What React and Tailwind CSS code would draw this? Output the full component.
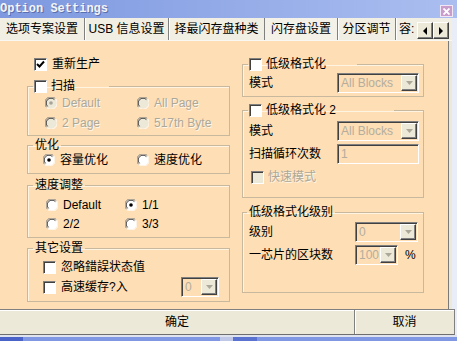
import clsx from 'clsx';

const FONT = "font-['Liberation_Sans','Noto_Sans_CJK_SC',sans-serif]";

function Check({ checked, disabled }) {
  return (
    <span
      className={clsx(
        'flex items-center justify-center w-[13px] h-[13px] shrink-0 border border-t-[#808080] border-l-[#808080] border-b-white border-r-white shadow-[inset_1px_1px_0_#404040]',
        disabled ? 'bg-[#ece9d8]' : 'bg-white'
      )}
    >
      {checked && (
        <svg width="9" height="9" viewBox="0 0 9 9">
          <path d="M1 4 L3.5 6.5 L8 1.5" stroke="#000" strokeWidth="2" fill="none" />
        </svg>
      )}
    </span>
  );
}

function Radio({ checked, disabled }) {
  return (
    <svg width="12" height="12" viewBox="0 0 12 12" className="shrink-0">
      <circle cx="6" cy="6" r="5.5" fill={disabled ? '#ece9d8' : '#fff'} />
      <path d="M1.6 10.4 A6 6 0 0 1 10.4 1.6" stroke="#808080" fill="none" />
      <path d="M2.6 9.4 A4.6 4.6 0 0 1 9.4 2.6" stroke="#404040" fill="none" />
      <path d="M10.4 1.6 A6 6 0 0 1 1.6 10.4" stroke="#fff" fill="none" />
      {checked && <circle cx="6" cy="6" r="1.8" fill={disabled ? '#a8a398' : '#000'} />}
    </svg>
  );
}

function Opt({ label, checked, disabled, gap = 'gap-[5px]' }) {
  return (
    <div className={clsx('flex items-center h-[16px]', gap)}>
      <Radio checked={checked} disabled={disabled} />
      <span className={disabled ? 'text-[#aca899] [text-shadow:1px_1px_0_#fff6e8]' : 'text-black'}>{label}</span>
    </div>
  );
}

function DropBtn() {
  return (
    <span className="flex items-center justify-center w-[16px] h-[16px] m-px bg-[#ece9d8] border border-t-white border-l-white border-b-[#404040] border-r-[#404040] shadow-[inset_-1px_-1px_0_#808080]">
      <svg width="7" height="4" viewBox="0 0 7 4">
        <path d="M0 0 H7 L3.5 4 Z" fill="#aca899" />
      </svg>
    </span>
  );
}

function Combo({ value, className, noBtn }) {
  return (
    <div
      className={clsx(
        'flex h-[20px] border border-t-[#808080] border-l-[#808080] border-b-white border-r-white shadow-[inset_1px_1px_0_#404040] bg-[#fddeb5]',
        className
      )}
    >
      <span className="flex-1 pl-[3px] leading-[18px] text-[#b4ad9f] overflow-hidden whitespace-nowrap">{value}</span>
      {!noBtn && <DropBtn />}
    </div>
  );
}

function Group({ legend, legendClass, className, children }) {
  return (
    <fieldset className={clsx('border border-[#c8b89e] shadow-[inset_1px_1px_0_#fff3e2]', className)}>
      <legend className={clsx('h-[14px] leading-[14px]', legendClass)}>
        <span className="flex items-center gap-[4px] h-[14px]">{legend}</span>
      </legend>
      {children}
    </fieldset>
  );
}

const TABS = [
  { label: '选项专案设置', w: 'w-[85px]' },
  { label: 'USB 信息设置', w: 'w-[84px]' },
  { label: '择最闪存盘种类', w: 'w-[96px]' },
  { label: '闪存盘设置', w: 'w-[73px]', active: true },
  { label: '分区调节', w: 'w-[58px]' },
];

export default function App() {
  return (
    <div className={clsx('w-[457px] h-[341px] overflow-hidden flex flex-col bg-[#e9edf8] text-[12px] text-black', FONT)}>
      {/* title bar */}
      <div className="h-[18px] shrink-0 flex items-center justify-between bg-gradient-to-r from-[#7d98df] to-[#abbef0]">
        <span className="font-['Liberation_Mono',monospace] font-bold text-[12px] leading-[18px] text-[#f4f4f4] [text-shadow:1px_1px_0_#5a6fae]">
          Option Settings
        </span>
        <span className="mr-[4px] mt-[4px] w-[13px] h-[12px] flex items-center justify-center bg-[#c89ccb] border border-[#f0e6f4]">
          <svg width="7" height="7" viewBox="0 0 7 7">
            <path d="M0.5 0.5 L6.5 6.5 M6.5 0.5 L0.5 6.5" stroke="#fff" strokeWidth="1.8" />
          </svg>
        </span>
      </div>

      {/* tabs */}
      <div className="h-[23px] shrink-0 flex items-stretch bg-[#f1eee3] border-b border-[#faf8f2] w-[452px]">
        {TABS.map(t => (
          <div
            key={t.label}
            className={clsx(
              'flex items-center justify-center border-r border-r-[#808080] shadow-[1px_0_0_#fff] whitespace-nowrap',
              t.w,
              t.active && 'bg-[#f4f1e8]'
            )}
          >
            {t.label}
          </div>
        ))}
        <div className="w-[20px] flex items-center pl-[3px] overflow-hidden whitespace-nowrap">容:</div>
        <div className="flex items-end pb-[1px] ml-[1px]">
          {['M5 0 L1 4 L5 8 Z', 'M1 0 L5 4 L1 8 Z'].map(d => (
            <span
              key={d}
              className="w-[16px] h-[17px] flex items-center justify-center bg-[#ece9d8] border border-t-white border-l-white border-b-[#404040] border-r-[#404040] shadow-[inset_-1px_-1px_0_#808080]"
            >
              <svg width="6" height="8" viewBox="0 0 6 8">
                <path d={d} fill="#000" />
              </svg>
            </span>
          ))}
        </div>
      </div>

      {/* body */}
      <div className="h-[268px] shrink-0 w-[452px] flex bg-[#fddeb5] border-r-[3px] border-r-[#ece9d8] shadow-[inset_-1px_0_0_#7a7a7a]">
        <div className="flex gap-[12px] pl-[27px]">
          {/* left column */}
          <div className="w-[203px] flex flex-col pt-[15px]">
            <div className="flex items-center gap-[5px] h-[16px] pl-[7px]">
              <Check checked />
              <span>重新生产</span>
            </div>

            <Group
              className="mt-[7px] pb-[4px]"
              legendClass="ml-[5px] px-[1px] w-[76px]"
              legend={<><Check /><span>扫描</span></>}
            >
              <div className="grid grid-cols-[92px_1fr] gap-y-[4px] pl-[17px] mt-[2px]">
                <Opt label="Default" checked disabled />
                <Opt label="All Page" disabled />
                <Opt label="2 Page" disabled />
                <Opt label="517th Byte" disabled />
              </div>
            </Group>

            <Group className="mt-[2px] pb-[5px]" legendClass="ml-[5px] px-[2px]" legend="优化">
              <div className="grid grid-cols-[94px_1fr] pl-[15px]">
                <Opt label="容量优化" checked />
                <Opt label="速度优化" />
              </div>
            </Group>

            <Group className="mt-[4px] pb-[5px]" legendClass="ml-[5px] px-[2px]" legend="速度调整">
              <div className="grid grid-cols-[79px_1fr] gap-y-[3px] pl-[18px] mt-[5px]">
                <Opt label="Default" />
                <Opt label="1/1" checked />
                <Opt label="2/2" />
                <Opt label="3/3" />
              </div>
            </Group>

            <Group className="mt-[3px] pb-[4px]" legendClass="ml-[5px] px-[2px]" legend="其它设置">
              <div className="flex flex-col pl-[15px] pr-[10px] mt-[4px] gap-[2px]">
                <div className="flex items-center gap-[5px] h-[16px]">
                  <Check />
                  <span>忽略錯誤状态值</span>
                </div>
                <div className="flex items-center justify-between h-[20px]">
                  <div className="flex items-center gap-[5px]">
                    <Check />
                    <span>高速缓存?入</span>
                  </div>
                  <Combo value="0" className="w-[38px]" />
                </div>
              </div>
            </Group>
          </div>

          {/* right column */}
          <div className="w-[182px] flex flex-col">
            <Group
              className="mt-[16px] pb-[3px]"
              legendClass="ml-[5px] px-[1px] w-[109px]"
              legend={<><Check /><span>低级格式化</span></>}
            >
              <div className="flex items-center justify-between pl-[6px] pr-[4px] mt-[2px]">
                <span>模式</span>
                <Combo value="All Blocks" className="w-[82px]" />
              </div>
            </Group>

            <Group
              className="mt-[6px] pb-[12px]"
              legendClass="ml-[5px] px-[1px] w-[146px]"
              legend={<><Check /><span>低级格式化 2</span></>}
            >
              <div className="flex flex-col pl-[6px] pr-[4px] mt-[4px]">
                <div className="flex items-center justify-between">
                  <span>模式</span>
                  <Combo value="All Blocks" className="w-[82px]" />
                </div>
                <div className="flex items-center justify-between mt-[3px]">
                  <span>扫描循环次数</span>
                  <Combo value="1" noBtn className="w-[82px]" />
                </div>
                <div className="flex items-center gap-[4px] h-[16px] mt-[5px] pl-[2px]">
                  <Check disabled />
                  <span className="text-[#aca899] [text-shadow:1px_1px_0_#fff6e8]">快速模式</span>
                </div>
              </div>
            </Group>

            <Group className="mt-[7px] pb-[27px]" legendClass="ml-[4px] px-[2px]" legend="低级格式化级别">
              <div className="flex flex-col pl-[6px] mt-[3px] gap-[3px]">
                <div className="grid grid-cols-[106px_auto] items-center">
                  <span>级别</span>
                  <Combo value="0" className="w-[63px]" />
                </div>
                <div className="grid grid-cols-[106px_auto] items-center">
                  <span>一芯片的区块数</span>
                  <div className="flex items-center gap-[7px]">
                    <Combo value="100" className="w-[43px]" />
                    <span>%</span>
                  </div>
                </div>
              </div>
            </Group>
          </div>
        </div>
      </div>

      {/* buttons */}
      <div className="h-[26px] shrink-0 w-[455px] flex bg-[#ece9d8] border-t border-t-[#808080] border-b border-b-[#6e6e6e] border-r border-r-[#808080] shadow-[inset_0_1px_0_#fff]">
        <div className="w-[355px] flex items-center justify-center border-r border-r-[#808080] shadow-[1px_0_0_#fff]">确定</div>
        <div className="flex-1 flex items-center justify-center">取消</div>
      </div>

      {/* taskbar strip */}
      <div className="flex-1 flex border-t-2 border-t-[#dfe3ee]">
        <div className="w-[23px] bg-[#4a63c8]" />
        <div className="w-[197px] bg-[#8097e4]" />
        <div className="w-[13px] bg-[#c0c8e8]" />
        <div className="w-[24px] bg-[#5a72d0]" />
        <div className="flex-1 bg-[#8097e4]" />
      </div>
    </div>
  );
}
